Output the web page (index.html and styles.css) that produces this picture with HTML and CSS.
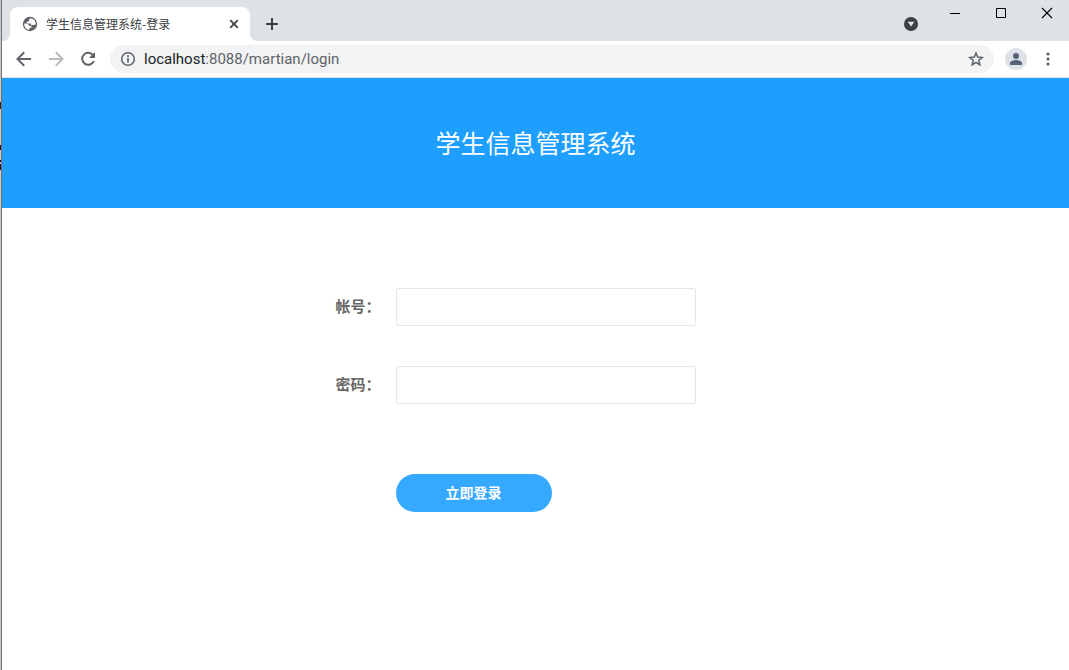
FILE: index.html
```html
<!DOCTYPE html>
<html lang="zh-CN">
<head>
<meta charset="utf-8">
<title>学生信息管理系统-登录</title>
<link rel="stylesheet" href="styles.css">
</head>
<body>
<div class="desktop-edge"></div>
<div class="window">
  <div class="tabstrip">
    <div class="tab">
      <svg class="favicon" viewBox="0 0 16 16" aria-hidden="true"><circle cx="8" cy="8" r="7.2" fill="#5f6368"/><path d="M8.6 2.2L7 3.4V5L4.8 6V7.4H8.6L9.4 9H11.4L13.8 8.4C14 5.2 11.8 2.6 8.6 2.2ZM2.2 7.4C1.9 10.8 4.4 13.6 7.4 13.8V12.2L9.4 11.4V9.8H7.2L6.2 8.2L4 7.4Z" fill="#fff"/></svg>
      <span class="tab-title">学生信息管理系统-登录</span>
      <button class="tab-close" aria-label="关闭标签页"><svg viewBox="0 0 10 10"><path d="M1.2 1.2L8.8 8.8M8.8 1.2L1.2 8.8" stroke="#3c4043" stroke-width="1.7"/></svg></button>
    </div>
    <button class="new-tab" aria-label="新标签页"><svg viewBox="0 0 12 12"><path d="M6 0V12M0 6H12" stroke="#3c4043" stroke-width="2"/></svg></button>
    <button class="tab-search" aria-label="搜索标签页"><svg viewBox="0 0 14 14"><circle cx="7" cy="7" r="7" fill="#3c4043"/><path d="M3.6 4.8H10.4L7 9.6Z" fill="#dee1e6"/></svg></button>
    <div class="window-controls">
      <button aria-label="最小化"><svg viewBox="0 0 12 12"><path d="M1 6.5H11" stroke="#000"/></svg></button>
      <button aria-label="最大化"><svg viewBox="0 0 12 12"><path d="M1.5 1.5H10.5V10.5H1.5Z" fill="none" stroke="#000"/></svg></button>
      <button aria-label="关闭"><svg viewBox="0 0 12 12"><path d="M1 1L11 11M11 1L1 11" stroke="#000" stroke-width="1.1"/></svg></button>
    </div>
  </div>
  <div class="toolbar">
    <button class="nav" aria-label="后退"><svg viewBox="0 0 16 16"><path d="M15 8H2M8.2 1.3L1.5 8L8.2 14.7" fill="none" stroke="#5f6368" stroke-width="2"/></svg></button>
    <button class="nav" aria-label="前进" disabled><svg viewBox="0 0 16 16"><path d="M1 8H14M7.8 1.3L14.5 8L7.8 14.7" fill="none" stroke="#babcbe" stroke-width="2"/></svg></button>
    <button class="nav" aria-label="重新加载"><svg viewBox="0 0 16 16"><path d="M13.2 4.5A6 6 0 1 0 13.8 10" fill="none" stroke="#5f6368" stroke-width="2"/><path d="M15 1V7H9Z" fill="#5f6368"/></svg></button>
    <div class="omnibox">
      <svg class="info" viewBox="0 0 16 16" aria-hidden="true"><circle cx="8" cy="8" r="6.3" fill="none" stroke="#5f6368" stroke-width="1.5"/><path d="M8 7V11.5M8 4.3V6" stroke="#5f6368" stroke-width="1.7"/></svg>
      <div class="url" role="textbox" aria-label="地址" contenteditable="true" spellcheck="false"><span class="host">localhost</span>:8088/martian/login</div>
      <button class="star" aria-label="收藏"><svg viewBox="0 0 16 16"><path d="M8 2L9.7 6.1L14.2 6.5L10.8 9.4L11.8 13.8L8 11.5L4.2 13.8L5.2 9.4L1.8 6.5L6.3 6.1Z" fill="none" stroke="#5f6368" stroke-width="1.5"/></svg></button>
    </div>
    <button class="avatar" aria-label="个人资料"><svg viewBox="0 0 22 22"><circle cx="11" cy="11" r="11" fill="#dee1e6"/><circle cx="11" cy="8" r="3" fill="#56627a"/><path d="M5 17V15C5 13 9 12 11 12S17 13 17 15V17Z" fill="#56627a"/></svg></button>
    <button class="more" aria-label="更多"><svg viewBox="0 0 4 14"><g fill="#5f6368"><circle cx="2" cy="2" r="1.6"/><circle cx="2" cy="7" r="1.6"/><circle cx="2" cy="12" r="1.6"/></g></svg></button>
  </div>
  <main>
    <header class="banner"><h1>学生信息管理系统</h1></header>
    <form class="login">
      <div class="field"><label for="account">帐号：</label><input id="account" type="text"></div>
      <div class="field"><label for="password">密码：</label><input id="password" type="password"></div>
      <div class="actions"><button class="submit" type="button">立即登录</button></div>
    </form>
  </main>
</div>
</body>
</html>
```

FILE: styles.css
```css
* { box-sizing: border-box; }

body {
  margin: 0;
  min-height: 100vh;
  display: flex;
  background: #fff;
  font-family: "Noto Sans CJK SC", sans-serif;
}

button {
  padding: 0;
  border: 0;
  background: none;
  display: flex;
  align-items: center;
  justify-content: center;
}

svg { display: block; }

.desktop-edge {
  width: 1px;
  background: linear-gradient(#c8c8c8 102px, #402010 102px, #402010 109px, #c8c8c8 109px, #c8c8c8 145px, #300030 145px, #300030 150px, #c8c8c8 150px, #c8c8c8 160px, #300050 160px, #300050 162px, #c8c8c8 162px, #c8c8c8 164px, #300050 164px, #300050 170px, #c8c8c8 170px);
}

.window {
  flex: 1;
  min-width: 0;
  border-left: 1px solid #707070;
}

.tabstrip {
  height: 41px;
  display: flex;
  align-items: flex-end;
  padding-left: 8px;
  background: #dee1e6;
}

.tab {
  position: relative;
  width: 240px;
  height: 34px;
  display: flex;
  align-items: center;
  padding: 0 11px 0 12px;
  border-radius: 8px 8px 0 0;
  background: #fff;
}

.tab::before,
.tab::after {
  content: "";
  position: absolute;
  bottom: 0;
  width: 8px;
  height: 8px;
}

.tab::before {
  right: 100%;
  background: radial-gradient(circle at 0 0, transparent 8px, #fff 8px);
}

.tab::after {
  left: 100%;
  background: radial-gradient(circle at 100% 0, transparent 8px, #fff 8px);
}

.favicon { width: 16px; height: 16px; }

.tab-title {
  flex: 1;
  margin-left: 8px;
  font-size: 12px;
  line-height: 16px;
  white-space: nowrap;
  color: #3c4043;
}

.tab-close svg { width: 10px; height: 10px; }

.new-tab {
  width: 28px;
  height: 34px;
  margin-left: 8px;
}

.new-tab svg { width: 12px; height: 12px; }

.tab-search {
  width: 28px;
  height: 34px;
  margin-left: auto;
}

.tab-search svg { width: 14px; height: 14px; }

.window-controls {
  display: flex;
  align-self: flex-start;
  margin-left: 7px;
}

.window-controls button { width: 46px; height: 26px; }
.window-controls svg { width: 12px; height: 12px; }
.window-controls button:last-child { width: 45px; }

.toolbar {
  height: 37px;
  display: flex;
  align-items: center;
  padding: 0 10px 0 6px;
  border-bottom: 1px solid #dee1e6;
  background: #fff;
}

.nav { width: 32px; height: 28px; }
.nav svg { width: 16px; height: 16px; }

.omnibox {
  flex: 1;
  min-width: 0;
  height: 28px;
  display: flex;
  align-items: center;
  margin-left: 6px;
  padding: 0 10px;
  border-radius: 14px;
  background: #f1f3f4;
}

.info { width: 16px; height: 16px; }

.url {
  flex: 1;
  min-width: 0;
  margin-left: 8px;
  font-family: Roboto, sans-serif;
  font-size: 15px;
  line-height: 20px;
  white-space: nowrap;
  overflow: hidden;
  color: #5f6368;
}

.host { color: #202124; }

.star svg { width: 16px; height: 16px; }

.avatar { margin-left: 11px; }
.avatar svg { width: 22px; height: 22px; }

.more { width: 22px; height: 28px; margin-left: 10px; }
.more svg { width: 4px; height: 14px; }

.banner {
  height: 130px;
  display: flex;
  align-items: center;
  justify-content: center;
  padding-bottom: 2px;
  background: #1e9fff;
}

.banner h1 {
  margin: 0;
  font-size: 25px;
  font-weight: 400;
  line-height: 36px;
  color: #fff;
}

.login {
  max-width: 500px;
  margin: 80px auto 0;
}

.field {
  display: flex;
  align-items: center;
  margin-bottom: 40px;
}

.field label {
  width: 110px;
  padding: 0 15px 2px 0;
  text-align: right;
  font-size: 15px;
  font-weight: 700;
  line-height: 20px;
  color: #666;
}

.field input {
  width: 300px;
  height: 38px;
  padding: 0 10px;
  border: 1px solid #e6e6e6;
  border-radius: 2px;
  background: #fff;
  font-size: 14px;
}

.actions { padding: 30px 0 0 110px; }

.submit {
  width: 156px;
  height: 38px;
  padding-bottom: 2px;
  border-radius: 19px;
  background: #35a9ff;
  font-family: inherit;
  font-size: 14px;
  font-weight: 700;
  color: #fff;
}
```
